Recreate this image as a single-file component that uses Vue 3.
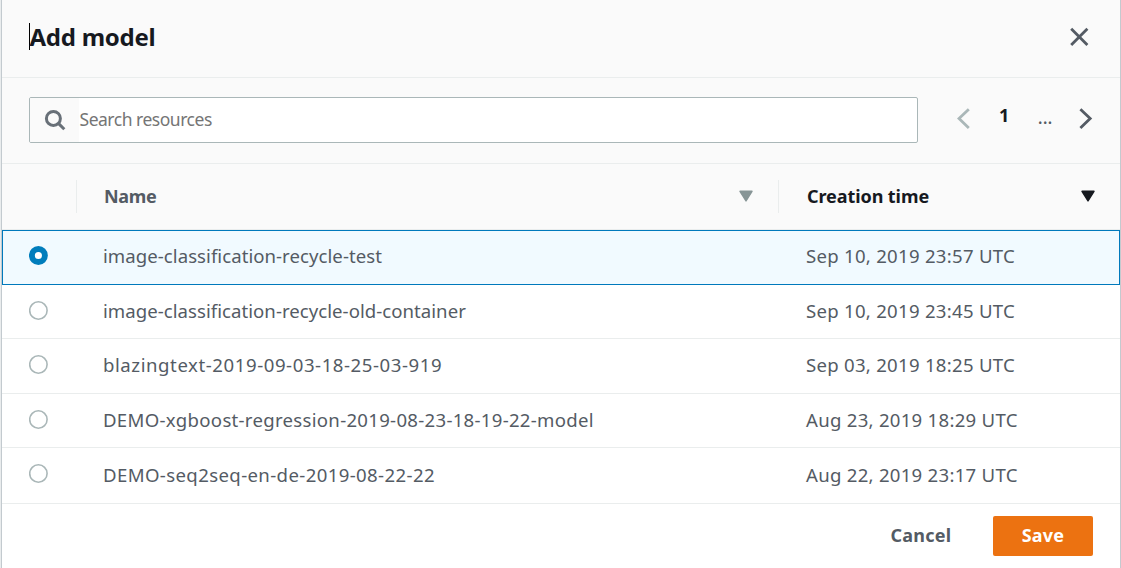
<script setup>
import { ref } from 'vue'

const selected = ref(0)
const models = [
  { name: 'image-classification-recycle-test', created: 'Sep 10, 2019 23:57 UTC', track: 0.05 },
  { name: 'image-classification-recycle-old-container', created: 'Sep 10, 2019 23:45 UTC', track: 0.04 },
  { name: 'blazingtext-2019-09-03-18-25-03-919', created: 'Sep 03, 2019 18:25 UTC', track: 0.57 },
  { name: 'DEMO-xgboost-regression-2019-08-23-18-19-22-model', created: 'Aug 23, 2019 18:29 UTC', track: 0.29 },
  { name: 'DEMO-seq2seq-en-de-2019-08-22-22', created: 'Aug 22, 2019 23:17 UTC', track: 0.38 },
]
</script>

<template>
  <div class="page">
    <section class="modal">
      <header class="head">
        <h1 class="title"><span class="title-text">Add model</span></h1>
        <svg class="close" width="20" height="20" viewBox="0 0 20 20"><path d="M2.2 1.7 18.4 17.9M18.4 1.7 2.2 17.9" /></svg>
      </header>

      <div class="tools">
        <div class="search">
          <div class="search-icon">
            <svg width="22" height="22" viewBox="0 0 22 22"><circle cx="9.4" cy="9.4" r="7" /><path d="M14.4 14.4 20.3 20.3" /></svg>
          </div>
          <div class="search-input"><span class="placeholder">Search resources</span></div>
        </div>
        <nav class="pager">
          <svg class="prev" width="14" height="22" viewBox="0 0 14 22"><path d="M11.8 1.2 2 10.6 11.8 20" /></svg>
          <span class="current">1</span>
          <span class="dots">...</span>
          <svg class="next" width="14" height="22" viewBox="0 0 14 22"><path d="M1.4 1.2 11.2 10.6 1.4 20" /></svg>
        </nav>
      </div>

      <div class="grid columns">
        <div class="col-pick"></div>
        <div class="col-name">
          <span class="label-name">Name</span>
          <svg class="sort" width="14" height="12" viewBox="0 0 14 12"><path d="M1 1.3H13L7 10.9Z" /></svg>
        </div>
        <div class="col-time">
          <span class="label-time">Creation time</span>
          <svg class="sort" width="14" height="12" viewBox="0 0 14 12"><path d="M1 1.3H13L7 10.9Z" /></svg>
        </div>
      </div>

      <div class="rows">
        <div
          v-for="(m, i) in models"
          :key="m.name"
          class="grid row"
          :class="['row-' + i, { selected: selected === i }]"
          @click="selected = i"
        >
          <div class="pick">
            <svg class="radio" width="19" height="19" viewBox="0 0 19 19">
              <circle cx="9.4" cy="9.5" :r="selected === i ? 6.5 : 8.7" />
            </svg>
          </div>
          <div class="name"><span :style="{ letterSpacing: m.track + 'px' }">{{ m.name }}</span></div>
          <div class="time"><span>{{ m.created }}</span></div>
        </div>
      </div>

      <footer class="foot">
        <button class="cancel">Cancel</button>
        <button class="save">Save</button>
      </footer>
    </section>
  </div>
</template>

<style>
body {
  background: #e9eced;
}
</style>

<style scoped>
.page {
  height: 568px;
  padding-left: 1px;
  box-sizing: border-box;
  overflow: hidden;
  font-family: "Noto Sans", "Open Sans", sans-serif;
  font-size: 18px;
  color: #545b64;
}
.modal {
  height: 568px;
  box-sizing: border-box;
  border-left: 1px solid #c3cacf;
  border-right: 1px solid #c3cacf;
  background: #fff;
}
svg {
  display: block;
  fill: none;
  stroke: currentColor;
  stroke-width: 2.8;
}
.head {
  display: flex;
  align-items: center;
  justify-content: space-between;
  box-sizing: border-box;
  height: 78px;
  padding: 0 31px 4px 27px;
  background: #fafafa;
  border-bottom: 1px solid #eaeded;
}
.title {
  display: flex;
  align-items: center;
  margin: 0;
  height: 27px;
  border-left: 1px solid #000;
  font-size: 24px;
  font-weight: 700;
  letter-spacing: -0.25px;
  color: #16191f;
}
.title-text {
  margin-left: -0.5px;
}
.tools {
  display: flex;
  align-items: center;
  box-sizing: border-box;
  height: 86px;
  padding: 0 27px 1px;
  background: #fafafa;
  border-bottom: 1px solid #eaeded;
}
.search {
  display: flex;
  box-sizing: border-box;
  width: 889px;
  height: 46px;
  margin-top: -1px;
  border: 1px solid #aab7b8;
  border-radius: 2px;
  background: #fff;
  overflow: hidden;
}
.search-icon {
  width: 49px;
  padding: 11px 0 0 14px;
  box-sizing: border-box;
  background: #fafafa;
  color: #687078;
}
.search-icon svg {
  stroke-width: 3;
}
.search-input {
  display: flex;
  align-items: center;
  padding: 0 0 1px 0.5px;
  font-size: 17.5px;
  letter-spacing: -0.48px;
  color: #757575;
}
.pager {
  display: flex;
  align-items: center;
  flex: 1;
  padding-left: 39px;
  margin-top: -8px;
}
.pager svg {
  margin-top: 5px;
}
.prev {
  color: #aab7b8;
}
.current {
  margin-left: 28px;
  margin-top: -2px;
  font-weight: 700;
  color: #16191f;
}
.dots {
  margin-left: 28.5px;
  margin-top: 1px;
  font-weight: 500;
}
.next {
  margin-left: auto;
}
.grid {
  display: grid;
  grid-template-columns: 75px 702px 1fr;
}
.columns {
  box-sizing: border-box;
  height: 66px;
  padding: 16px 0;
  background: #fafafa;
  border-bottom: 1px solid #eaeded;
  font-weight: 700;
}
.col-pick,
.col-name {
  box-sizing: border-box;
  border-right: 1px solid #eaeded;
}
.col-name,
.col-time {
  display: flex;
  align-items: center;
  justify-content: space-between;
  padding: 0 25px 1px 27px;
}
.label-name {
  letter-spacing: -0.35px;
}
.label-time {
  letter-spacing: -0.08px;
}
.label-name,
.label-time {
  margin-top: -1px;
}
.col-time {
  padding-left: 28px;
  color: #16191f;
}
.sort {
  fill: currentColor;
  stroke-width: 1.4;
  stroke-linejoin: round;
}
.col-name .sort {
  color: #879596;
}
.row {
  box-sizing: border-box;
  height: 55px;
  border-bottom: 1px solid #eaeded;
}
.row-1,
.row-3 {
  height: 54px;
}
.row-4 {
  height: 56px;
}
.row.selected {
  border: 1px solid #0079bc;
  background: #f1faff;
  grid-template-columns: 74px 702px 1fr;
}
.pick {
  padding: 16px 0 0 27px;
}
.row-1 .pick,
.row-3 .pick {
  padding-top: 15.5px;
}
.radio {
  color: #aab7b8;
  fill: #fff;
  stroke-width: 1.6;
}
.selected .pick {
  padding: 15px 0 0 26px;
}
.selected .radio {
  color: #007dbc;
  stroke-width: 5.9;
}
.name,
.time {
  display: flex;
  align-items: center;
  padding: 0 0 2px 26px;
  font-size: 18.6px;
  white-space: nowrap;
}
.row-2 .name,
.row-2 .time {
  padding-bottom: 4px;
}
.selected .name,
.selected .time {
  padding-bottom: 5px;
}
.time {
  padding-left: 27px;
  letter-spacing: 0.27px;
}
.foot {
  display: flex;
  align-items: center;
  justify-content: flex-end;
  height: 64px;
  padding-right: 27px;
}
button {
  height: 40px;
  padding: 0 0 2px;
  border: 0;
  font: inherit;
  font-weight: 700;
  letter-spacing: 0.25px;
}
.cancel {
  width: 144px;
  background: transparent;
  color: #545b64;
}
.save {
  width: 100px;
  border-radius: 2px;
  background: #ec7211;
  color: #fff;
}
</style>
